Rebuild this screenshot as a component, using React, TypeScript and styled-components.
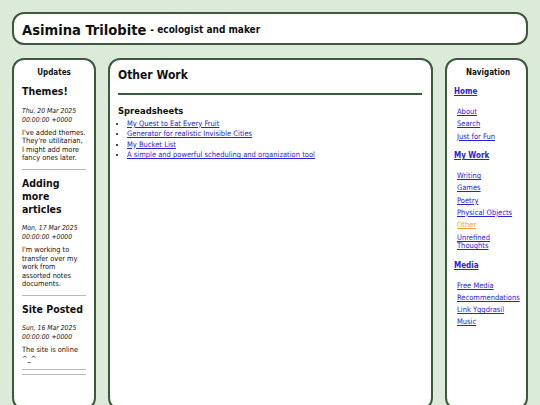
import React from "react";
import styled, { createGlobalStyle } from "styled-components";

const GlobalStyle = createGlobalStyle`
  html, body {
    margin: 0;
    padding: 0;
    background: #dcebd9;
    font-family: "DejaVu Sans Condensed", "DejaVu Sans", Verdana, sans-serif;
    color: #111;
  }
`;

const Page = styled.div`
  padding: 12px;
  display: flex;
  flex-direction: column;
  gap: 13px;
`;

const Box = styled.div`
  background: #fff;
  border: 2px solid #3b5a3b;
  border-radius: 12px;
  box-sizing: border-box;
`;

const Header = styled(Box)`
  height: 33px;
  display: flex;
  align-items: center;
  padding: 1px 8px 0;
`;

const Title = styled.span`
  font-size: 14.6px;
  font-weight: bold;
`;

const Tagline = styled.span`
  font-size: 10px;
  font-weight: bold;
  margin-left: 4px;
`;

const Columns = styled.div`
  display: grid;
  grid-template-columns: 84px 1fr 83px;
  gap: 12px;
`;

const Panel = styled(Box)<{ $pad: string }>`
  min-height: 352px;
  padding: ${(p) => p.$pad};
`;

const PanelTitle = styled.div<{ $gap: number }>`
  text-align: center;
  font-weight: bold;
  font-size: 8px;
  line-height: 10px;
  margin: 0 0 ${(p) => p.$gap}px;
`;

const Post = styled.article`
  border-bottom: 1px solid #b8b8b8;
  padding-bottom: 6px;
  margin-bottom: 7px;
`;

const PostTitle = styled.h3`
  font-size: 10.5px;
  line-height: 13px;
  margin: 0 0 8.5px;
  font-weight: bold;
`;

const PostDate = styled.div`
  font-style: italic;
  font-size: 6.8px;
  line-height: 9px;
  margin-bottom: 4px;
`;

const PostBody = styled.p`
  font-size: 7.35px;
  line-height: 8.5px;
  margin: 0;
`;

const EndRule = styled.hr`
  border: none;
  border-top: 1px solid #b8b8b8;
  margin: -3px 0 0;
`;

const MainTitle = styled.h2`
  font-size: 12px;
  line-height: 14px;
  font-weight: bold;
  margin: 0 0 10px;
  padding-bottom: 11px;
  border-bottom: 2px solid #3b5a3b;
`;

const SectionTitle = styled.h3`
  font-size: 9.4px;
  line-height: 12px;
  font-weight: bold;
  margin: 0 0 2px;
`;

const LinkList = styled.ul`
  margin: 0;
  padding-left: 9px;
  font-size: 7.5px;
  line-height: 10.4px;
`;

const Link = styled.a<{ $active?: boolean }>`
  color: ${(p) => (p.$active ? "#f0a030" : "#2b22d6")};
  text-decoration: underline;
`;

const NavHead = styled.div`
  font-size: 8px;
  line-height: 10px;
  font-weight: bold;
  margin: 0 0 11px;
`;

const NavItems = styled.div`
  display: flex;
  flex-direction: column;
  gap: 3.8px;
  font-size: 7.5px;
  line-height: 8.5px;
  padding-left: 3px;
  margin-bottom: 10px;
`;

const updates = [
  {
    title: "Themes!",
    date: ["Thu, 20 Mar 2025", "00:00:00 +0000"],
    body: "I've added themes. They're utilitarian, I might add more fancy ones later.",
  },
  {
    title: "Adding more articles",
    date: ["Mon, 17 Mar 2025", "00:00:00 +0000"],
    body: "I'm working to transfer over my work from assorted notes documents.",
  },
  {
    title: "Site Posted",
    date: ["Sun, 16 Mar 2025", "00:00:00 +0000"],
    body: "The site is online ^_^",
  },
];

const spreadsheets = [
  "My Quest to Eat Every Fruit",
  "Generator for realistic Invisible Cities",
  "My Bucket List",
  "A simple and powerful scheduling and organization tool",
];

const nav = [
  { head: "Home", items: ["About", "Search", "Just for Fun"] },
  {
    head: "My Work",
    items: ["Writing", "Games", "Poetry", "Physical Objects", "Other", "Unrefined Thoughts"],
  },
  { head: "Media", items: ["Free Media", "Recommendations", "Link Yggdrasil", "Music"] },
];

export default function App() {
  return (
    <>
      <GlobalStyle />
      <Page>
        <Header>
          <Title>Asimina Trilobite</Title>
          <Tagline>- ecologist and maker</Tagline>
        </Header>
        <Columns>
          <Panel $pad="8px 8px 7px 8px">
            <PanelTitle $gap={7}>Updates</PanelTitle>
            {updates.map((u) => (
              <Post key={u.title}>
                <PostTitle>{u.title}</PostTitle>
                <PostDate>
                  {u.date[0]}
                  <br />
                  {u.date[1]}
                </PostDate>
                <PostBody>{u.body}</PostBody>
              </Post>
            ))}
            <EndRule />
          </Panel>
          <Panel $pad="8px 9px 7px 8px">
            <MainTitle>Other Work</MainTitle>
            <SectionTitle>Spreadsheets</SectionTitle>
            <LinkList>
              {spreadsheets.map((s) => (
                <li key={s}>
                  <Link href="#">{s}</Link>
                </li>
              ))}
            </LinkList>
          </Panel>
          <Panel $pad="8px 4px 7px 7px">
            <PanelTitle $gap={9}>Navigation</PanelTitle>
            {nav.map((g) => (
              <div key={g.head}>
                <NavHead>
                  <Link href="#">{g.head}</Link>
                </NavHead>
                <NavItems>
                  {g.items.map((i) => (
                    <Link href="#" key={i} $active={i === "Other"}>
                      {i}
                    </Link>
                  ))}
                </NavItems>
              </div>
            ))}
          </Panel>
        </Columns>
      </Page>
    </>
  );
}
